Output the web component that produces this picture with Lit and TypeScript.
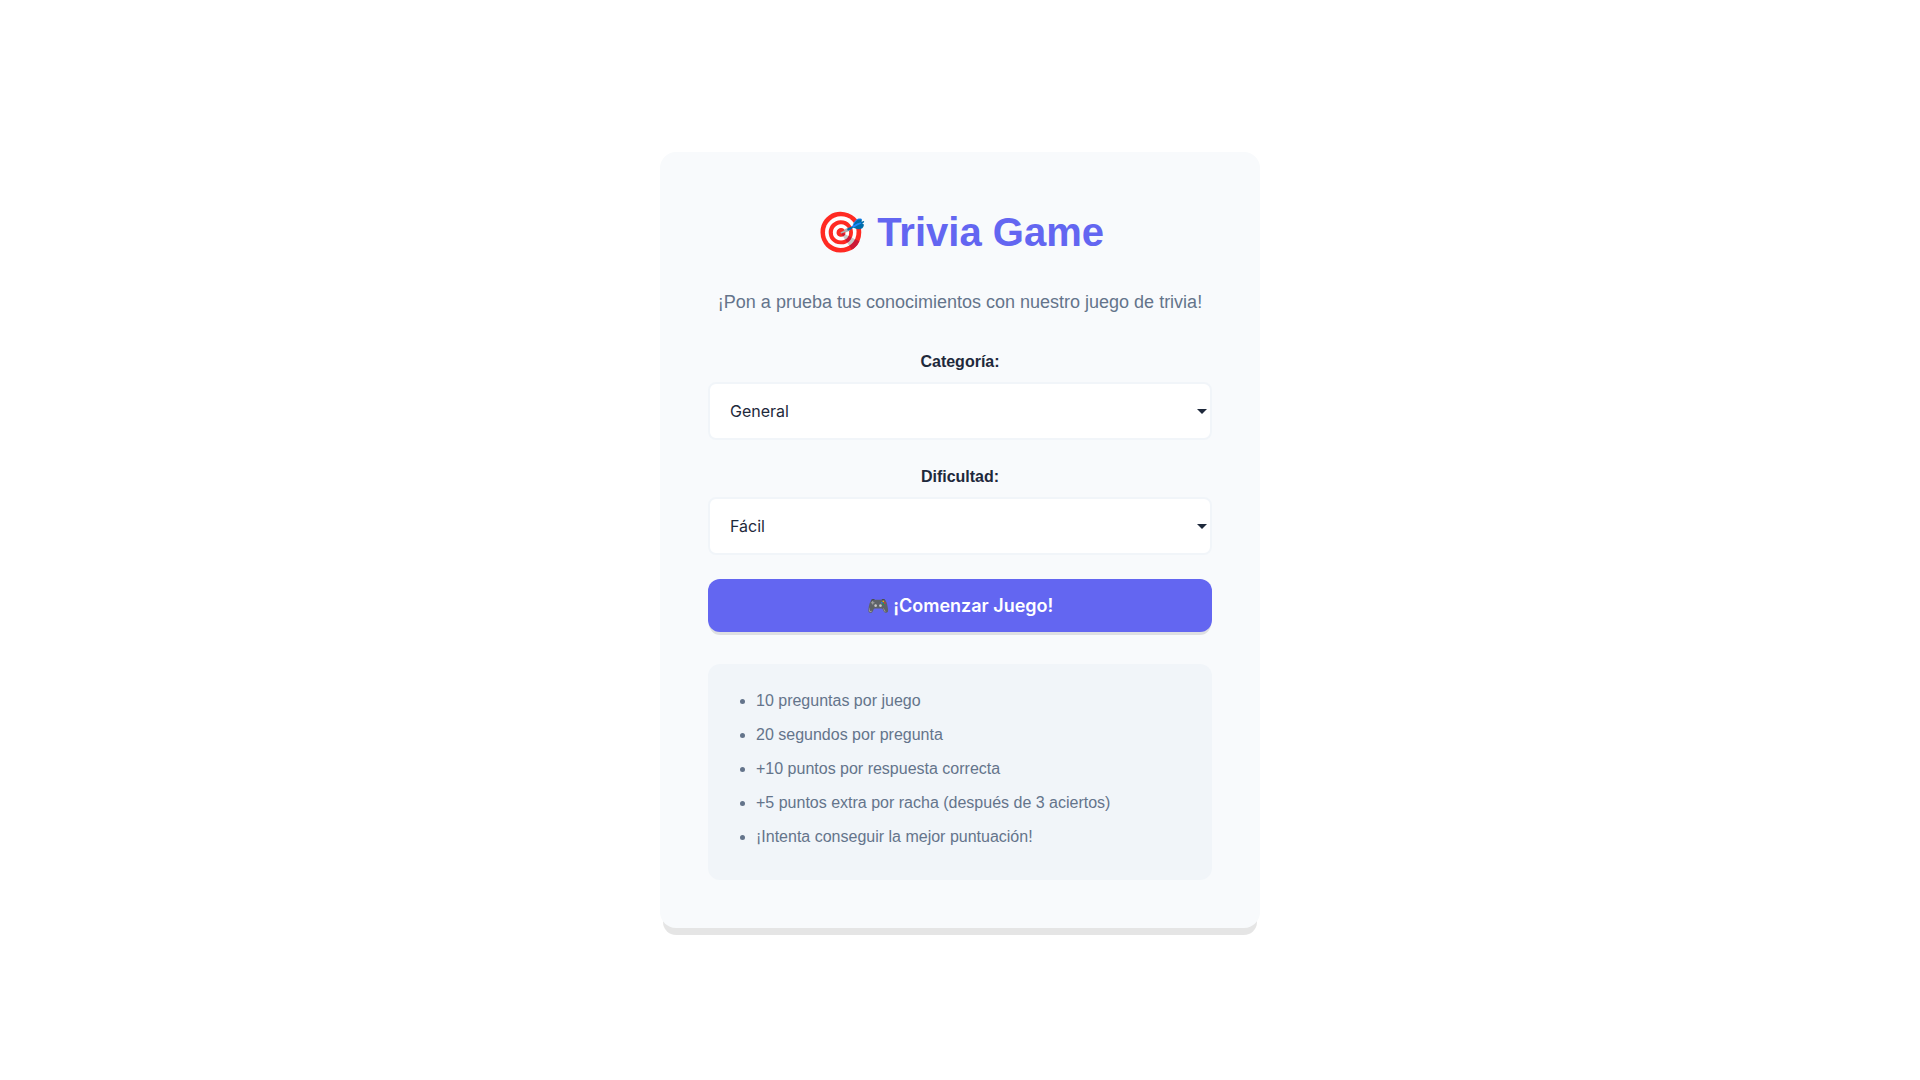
import { LitElement, html, css } from "lit";
import { customElement } from "lit/decorators.js";

const categories = ["General", "Ciencia", "Historia", "Geografía", "Deportes", "Arte"];
const levels = ["Fácil", "Medio", "Difícil"];
const rules = [
  "10 preguntas por juego",
  "20 segundos por pregunta",
  "+10 puntos por respuesta correcta",
  "+5 puntos extra por racha (después de 3 aciertos)",
  "¡Intenta conseguir la mejor puntuación!",
];

@customElement("app-root")
export class AppRoot extends LitElement {
  static styles = css`
    :host {
      display: flex;
      align-items: center;
      justify-content: center;
      min-height: 100vh;
      box-sizing: border-box;
      padding: 16px;
      background: #ffffff;
      color: #1e293b;
      font-family: "Liberation Sans", Arial, sans-serif;
      font-size: 16px;
      line-height: 26px;
    }
    * {
      box-sizing: border-box;
    }
    .card {
      width: 100%;
      max-width: 600px;
      padding: 48px;
      border-radius: 16px;
      background: #f8fafc;
      box-shadow: 0 10px 0 -3px rgba(0, 0, 0, 0.1);
      text-align: center;
    }
    .title {
      margin: 0 0 24px;
      color: #6366f1;
      font-size: 40px;
      line-height: 64px;
      font-weight: 700;
    }
    .lead {
      margin: 0 0 32px;
      color: #64748b;
      font-size: 18px;
      line-height: 29px;
    }
    .field {
      margin-bottom: 24px;
    }
    .label {
      display: block;
      margin-bottom: 8px;
      line-height: 25px;
      font-weight: 700;
    }
    .picker {
      display: grid;
      align-items: center;
    }
    .select {
      grid-area: 1 / 1;
      width: 100%;
      margin: 0;
      padding: 16px 20px;
      border: 2px solid #f1f5f9;
      border-radius: 8px;
      background: #ffffff;
      color: #1e293b;
      font-family: Inter, sans-serif;
      font-size: 16px;
      line-height: 22px;
      appearance: none;
    }
    .arrow {
      grid-area: 1 / 1;
      justify-self: end;
      width: 10px;
      height: 6px;
      margin-right: 5px;
      fill: #1e293b;
      pointer-events: none;
    }
    .start {
      display: block;
      width: 100%;
      padding: 16px 32px;
      border: 0;
      border-radius: 12px;
      background: #6366f1;
      color: #ffffff;
      box-shadow: 0 4px 0 -1px rgba(0, 0, 0, 0.1);
      font-family: Inter, sans-serif;
      font-size: 18px;
      line-height: 21px;
      font-weight: 600;
      cursor: pointer;
    }
    .rules {
      margin-top: 32px;
      padding: 24px 24px 30px;
      border-radius: 12px;
      background: #f1f5f9;
      color: #64748b;
      text-align: left;
    }
    .list {
      display: flex;
      flex-direction: column;
      gap: 8px;
      margin: 0;
      padding-left: 24px;
    }
  `;

  private picker(id: string, label: string, options: string[]) {
    return html`
      <div class="field">
        <label class="label" for=${id}>${label}</label>
        <div class="picker">
          <select class="select" id=${id}>
            ${options.map((name) => html`<option>${name}</option>`)}
          </select>
          <svg class="arrow" viewBox="0 0 10 6" aria-hidden="true">
            <path d="M0 1h10L5 6z" />
          </svg>
        </div>
      </div>
    `;
  }

  render() {
    return html`
      <main class="card">
        <h1 class="title">🎯 Trivia Game</h1>
        <p class="lead">¡Pon a prueba tus conocimientos con nuestro juego de trivia!</p>
        ${this.picker("category", "Categoría:", categories)}
        ${this.picker("level", "Dificultad:", levels)}
        <button class="start" type="button">🎮 ¡Comenzar Juego!</button>
        <section class="rules">
          <ul class="list">
            ${rules.map((rule) => html`<li>${rule}</li>`)}
          </ul>
        </section>
      </main>
    `;
  }
}
